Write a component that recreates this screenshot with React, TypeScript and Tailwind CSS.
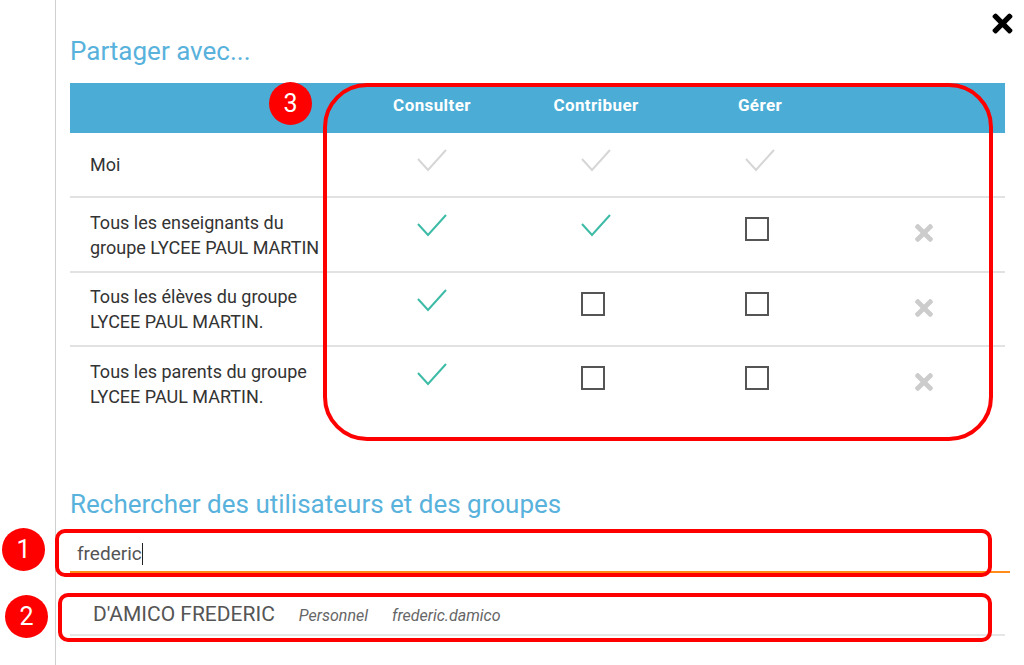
import { FaTimes } from 'react-icons/fa';

type Perm = 'on' | 'off' | 'fixed';

const rows: { label: string[]; perms: Perm[]; removable: boolean; h: string }[] = [
  { label: ['Moi'], perms: ['fixed', 'fixed', 'fixed'], removable: false, h: 'h-[65px] border-b-2' },
  { label: ['Tous les enseignants du', 'groupe LYCEE PAUL MARTIN'], perms: ['on', 'on', 'off'], removable: true, h: 'h-[75px] border-b-2' },
  { label: ['Tous les élèves du groupe', 'LYCEE PAUL MARTIN.'], perms: ['on', 'off', 'off'], removable: true, h: 'h-[74px] border-b-2' },
  { label: ['Tous les parents du groupe', 'LYCEE PAUL MARTIN.'], perms: ['on', 'off', 'off'], removable: true, h: 'h-[74px]' },
];

const Check = ({ color }: { color: string }) => (
  <svg width="30" height="24" viewBox="0 0 30 24" fill="none">
    <polyline points="1,11 11,22 29,2" stroke={color} strokeWidth="2" />
  </svg>
);

const PermCell = ({ perm }: { perm: Perm }) => {
  if (perm === 'off') {
    return (
      <div className="flex justify-center pt-[19px]">
        <div className="-ml-[6px] w-[24px] h-[24px] border-2 border-[#555]" />
      </div>
    );
  }
  return (
    <div className="flex justify-center pt-[15px]">
      <Check color={perm === 'on' ? '#3dbba6' : '#d6d6d6'} />
    </div>
  );
};

const Badge = ({ n, className }: { n: string; className: string }) => (
  <div className={`absolute w-[43px] h-[43px] rounded-full bg-[#ff0000] text-white flex items-center justify-center text-[25px] ${className}`}>
    {n}
  </div>
);

export default function App() {
  return (
    <div className="relative w-[1024px] h-[665px] bg-white flex overflow-hidden" style={{ fontFamily: 'Roboto, "Liberation Sans", sans-serif' }}>
      <div className="w-[56px] shrink-0 border-r border-[#cfcfcf]" />

      <div className="flex-1 pl-[14px] pr-[19px] pt-[35px]">
        <h2 className="text-[26px] leading-[32px] text-[#58b2dc] mb-[16px]">Partager avec...</h2>

        <div className="grid grid-cols-[280px_164px_164px_164px_1fr] h-[50px] bg-[#4badd5] items-center pb-[4px] text-white font-bold text-[17px] tracking-[0.4px]">
          <div />
          <div className="text-center">Consulter</div>
          <div className="text-center">Contribuer</div>
          <div className="text-center">Gérer</div>
          <div />
        </div>

        {rows.map((r, i) => (
          <div key={i} className={`grid grid-cols-[280px_164px_164px_164px_1fr] border-[#e2e2e2] ${r.h}`}>
            <div className="flex flex-col justify-center pl-[20px] text-[18px] leading-[25px] text-[#333]">
              {r.label.map((l) => (
                <span key={l} className="whitespace-nowrap">{l}</span>
              ))}
            </div>
            {r.perms.map((p, j) => (
              <PermCell key={j} perm={p} />
            ))}
            <div className="flex justify-center pt-[22px]">
              {r.removable && <FaTimes size={26} color="#cccccc" />}
            </div>
          </div>
        ))}

        <h2 className="mt-[67px] text-[26px] leading-[32px] text-[#58b2dc]">Rechercher des utilisateurs et des groupes</h2>

        <div className="pt-[22px] pb-[5px] pl-[7px] -mr-[5px] border-b-2 border-[#ff8c1a] flex items-center text-[19px] leading-[24px] text-[#555]">
          frederic
          <span className="inline-block w-px h-[22px] bg-[#222]" />
        </div>

        <div className="pt-[28px] pb-[6px] pl-[23px] border-b-2 border-[#e6e6e6] flex items-baseline gap-6 text-[#555]">
          <span className="text-[21px] leading-[26px]">D'AMICO FREDERIC</span>
          <span className="text-[16px] italic text-[#666]">Personnel</span>
          <span className="text-[16px] italic text-[#666]">frederic.damico</span>
        </div>
      </div>

      <button className="absolute top-[9px] right-[7px] text-black">
        <FaTimes size={29} />
      </button>

      {/* annotations */}
      <div className="absolute left-[323px] top-[83px] w-[670px] h-[358px] border-4 border-[#ff0000] rounded-[44px]" />
      <div className="absolute left-[55px] top-[529px] w-[937px] h-[48px] border-4 border-[#ff0000] rounded-[10px]" />
      <div className="absolute left-[58px] top-[593px] w-[934px] h-[49px] border-4 border-[#ff0000] rounded-[10px]" />
      <Badge n="3" className="left-[269px] top-[82px]" />
      <Badge n="1" className="left-[2px] top-[528px]" />
      <Badge n="2" className="left-[5px] top-[595px]" />
    </div>
  );
}
